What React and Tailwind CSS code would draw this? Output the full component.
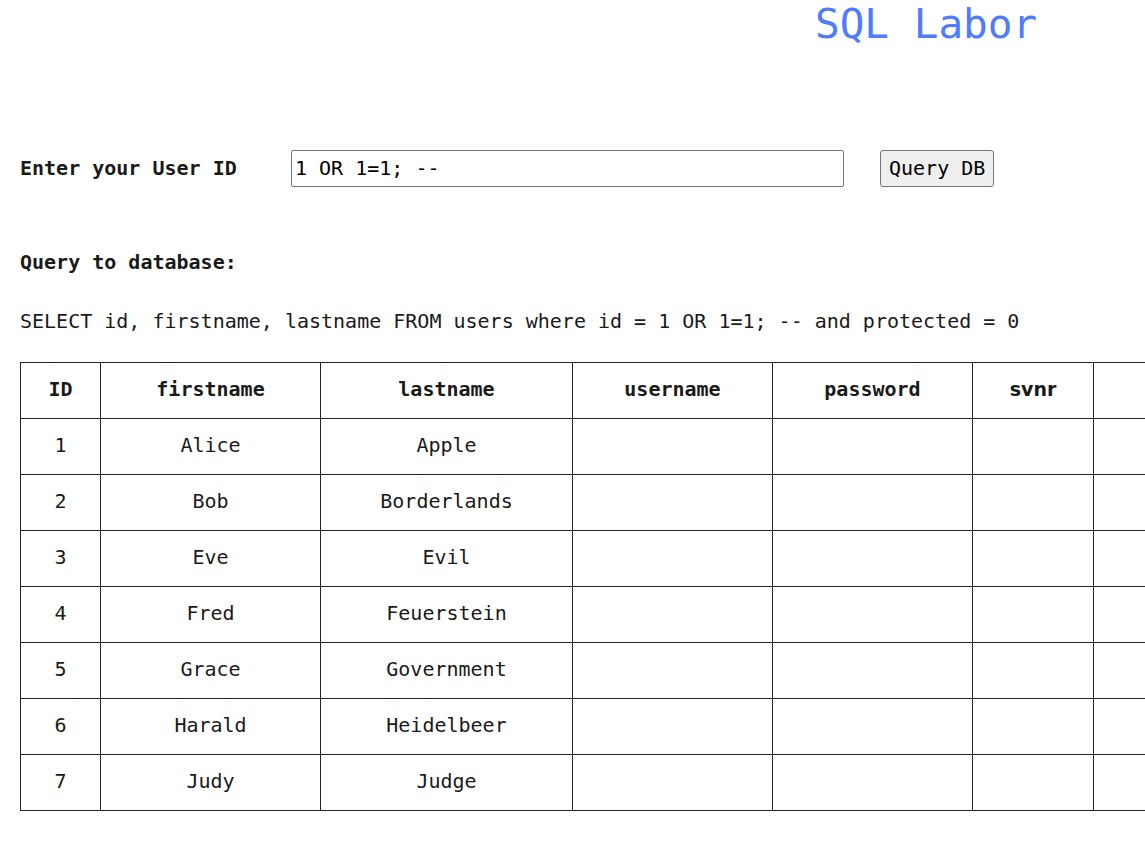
import React, {useState} from "react";

const mono = "font-['DejaVu_Sans_Mono',monospace]";

const rows = [
    {id: 1, firstname: "Alice", lastname: "Apple"},
    {id: 2, firstname: "Bob", lastname: "Borderlands"},
    {id: 3, firstname: "Eve", lastname: "Evil"},
    {id: 4, firstname: "Fred", lastname: "Feuerstein"},
    {id: 5, firstname: "Grace", lastname: "Government"},
    {id: 6, firstname: "Harald", lastname: "Heidelbeer"},
    {id: 7, firstname: "Judy", lastname: "Judge"},
];

const cell = "border border-[#222] pb-[3px]";

const App = () => {
    const [userId, setUserId] = useState("1 OR 1=1; --");

    return (
        <div className={`w-[1145px] h-[863px] overflow-hidden bg-white text-[#1a1a1a] ${mono}`}>
            <h1 className="ml-[815px] pt-[2px] text-[41px] leading-[44px] text-[#4f7bff] whitespace-nowrap">SQL Labor</h1>

            <div className="flex items-center mt-[104px] pl-5">
                <label className="w-[271px] text-[20px] font-bold leading-[22px] pb-[2px]">Enter your User ID</label>
                <input
                    type="text"
                    value={userId}
                    onChange={(e) => setUserId(e.target.value)}
                    className="w-[553px] h-[37px] border border-[#767676] rounded-[2px] px-[3px] pb-[2px] text-[20px] text-black outline-none"
                />
                <button className="ml-[36px] h-[37px] px-[8px] pb-[2px] bg-[#efefef] border border-[#767676] rounded-[3px] text-[20px] text-black">
                    Query DB
                </button>
            </div>

            <div className="mt-[63px] pl-5 text-[20px] font-bold leading-[24px]">Query to database:</div>
            <div className="mt-[35px] pl-5 text-[20px] leading-[24px] whitespace-nowrap">
                SELECT id, firstname, lastname FROM users where id = 1 OR 1=1; -- and protected = 0
            </div>

            <table className="mt-[29px] ml-5 border-collapse text-[20px] table-fixed w-[1325px]">
                <thead>
                    <tr className="h-[56px]">
                        <th className={`w-[80px] ${cell}`}>ID</th>
                        <th className={`w-[220px] ${cell}`}>firstname</th>
                        <th className={`w-[252px] ${cell}`}>lastname</th>
                        <th className={`w-[200px] ${cell}`}>username</th>
                        <th className={`w-[200px] ${cell}`}>password</th>
                        <th className={`w-[121px] ${cell} font-['DejaVu_Sans',sans-serif] text-[19px]`}>svnr</th>
                        <th className={`w-[252px] ${cell}`}></th>
                    </tr>
                </thead>
                <tbody>
                    {rows.map((r) => (
                        <tr key={r.id} className="h-[56px] text-center">
                            <td className={cell}>{r.id}</td>
                            <td className={cell}>{r.firstname}</td>
                            <td className={cell}>{r.lastname}</td>
                            <td className={cell}></td>
                            <td className={cell}></td>
                            <td className={cell}></td>
                            <td className={cell}></td>
                        </tr>
                    ))}
                </tbody>
            </table>
        </div>
    );
};

export default App;
